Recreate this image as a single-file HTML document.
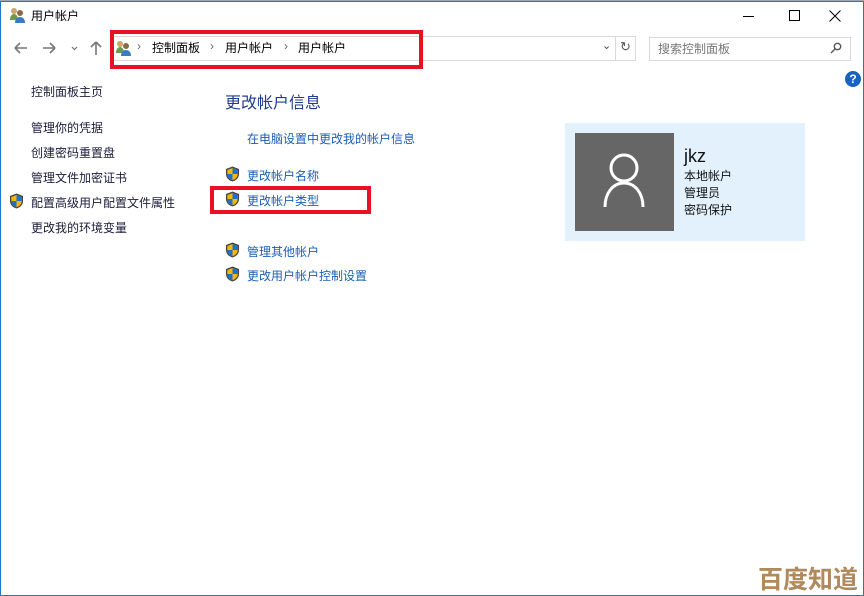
<!DOCTYPE html>
<html><head><meta charset="utf-8"><style>
*{margin:0;padding:0;box-sizing:border-box}
body{width:864px;height:596px;position:relative;background:#fff;font-family:"Liberation Sans","Noto Sans CJK SC",sans-serif;font-size:12px;overflow:hidden;color:#000}
.a{position:absolute;white-space:nowrap}
.nav{color:#1c1c3c;font-size:12px}
.lnk{color:#1a5fb4;font-size:12px}
.sh{position:absolute;width:15px;height:16px}
</style></head><body>
<div class="a" style="left:0;top:0;width:864px;height:2px;background:#9ab"></div>
<div class="a" style="left:0;top:1px;width:864px;height:595px;border:1px solid #1979ca"></div>
<svg class="a" style="left:9px;top:7px" width="17" height="16"><circle cx="5" cy="4" r="3" fill="#c9a66b"/><path d="M1 13c0-4 2-6 4-6s4 2 4 6z" fill="#6a9b4a"/><circle cx="11" cy="6" r="3" fill="#8b6a4a"/><path d="M6 16c0-4 2-6 5-6s5 2 5 6z" fill="#3a7cc4"/></svg>
<div class="a" style="left:31px;top:7px;font-size:12px">用户帐户</div>
<div class="a" style="left:743px;top:16px;width:11px;height:1px;background:#000"></div>
<div class="a" style="left:789px;top:10px;width:11px;height:11px;border:1px solid #000"></div>
<svg class="a" style="left:829px;top:10px" width="12" height="12" stroke="#000" stroke-width="1"><path d="M0.5 0.5l11 11M11.5 0.5l-11 11"/></svg>
<svg class="a" style="left:12px;top:39px" width="100" height="18" stroke="#777" stroke-width="1.6" fill="none"><path d="M3 9h12M3 9l5-5M3 9l5 5"/><path d="M31 9h12M43 9l-5-5M43 9l-5 5"/><path d="M60 8l2.5 2.5 2.5-2.5" stroke-width="1.2"/><path d="M84 3v13M84 3l-5 5M84 3l5 5"/></svg>
<div class="a" style="left:111px;top:36px;width:525px;height:25px;border:1px solid #d9d9d9"></div>
<div class="a" style="left:615px;top:36px;width:21px;height:25px;border-left:1px solid #d9d9d9"></div>
<div class="a" style="left:602px;top:39px;font-size:11px;color:#444">⌄</div>
<div class="a" style="left:620px;top:39px;font-size:13px;color:#555">↻</div>
<svg class="a" style="left:115px;top:40px" width="17" height="16"><circle cx="5" cy="4" r="3" fill="#c9a66b"/><path d="M1 13c0-4 2-6 4-6s4 2 4 6z" fill="#6a9b4a"/><circle cx="11" cy="6" r="3" fill="#8b6a4a"/><path d="M6 16c0-4 2-6 5-6s5 2 5 6z" fill="#3a7cc4"/></svg>
<div class="a" style="left:137px;top:39px;color:#666">›</div>
<div class="a" style="left:152px;top:39px">控制面板</div>
<div class="a" style="left:210px;top:39px;color:#666">›</div>
<div class="a" style="left:225px;top:39px">用户帐户</div>
<div class="a" style="left:284px;top:39px;color:#666">›</div>
<div class="a" style="left:298px;top:39px">用户帐户</div>
<div class="a" style="left:110px;top:30px;width:313px;height:39px;border:4px solid #e81123"></div>
<div class="a" style="left:649px;top:37px;width:202px;height:24px;border:1px solid #d9d9d9"></div>
<div class="a" style="left:658px;top:40px;color:#777">搜索控制面板</div>
<svg class="a" style="left:830px;top:42px" width="12" height="12" stroke="#555" stroke-width="1.4" fill="none"><circle cx="7.5" cy="4.5" r="3.2"/><path d="M5 7L1 11"/></svg>
<div class="a" style="left:845px;top:71px;width:16px;height:16px;border-radius:50%;background:#1a62c0;color:#fff;font-weight:bold;font-size:12px;text-align:center;line-height:16px">?</div>
<div class="a nav" style="left:31px;top:83px">控制面板主页</div>
<div class="a nav" style="left:31px;top:119px">管理你的凭据</div>
<div class="a nav" style="left:31px;top:144px">创建密码重置盘</div>
<div class="a nav" style="left:31px;top:169px">管理文件加密证书</div>
<div class="a nav" style="left:31px;top:194px">配置高级用户配置文件属性</div>
<div class="a nav" style="left:31px;top:219px">更改我的环境变量</div>
<div class="a" style="left:225px;top:89px;font-size:16px;color:#1e3d8c">更改帐户信息</div>
<div class="a lnk" style="left:247px;top:130px">在电脑设置中更改我的帐户信息</div>
<div class="a lnk" style="left:247px;top:167px">更改帐户名称</div>
<div class="a lnk" style="left:247px;top:192px">更改帐户类型</div>
<div class="a" style="left:210px;top:186px;width:161px;height:28px;border:4px solid #e81123"></div>
<div class="a lnk" style="left:247px;top:243px">管理其他帐户</div>
<div class="a lnk" style="left:247px;top:267px">更改用户帐户控制设置</div>
<svg width="0" height="0" style="position:absolute"><defs><g id="s"><path d="M7.5 0.5L14 3v5c0 4-3 6.5-6.5 7.5C4 14.5 1 12 1 8V3z" fill="#444"/><path d="M7.5 2L12.7 4v4c0 3.3-2.4 5.3-5.2 6.2C4.7 13.3 2.3 11.3 2.3 8V4z" fill="#f5b800"/><path d="M7.5 2L12.7 4v4H7.5zM7.5 8v6.2C4.7 13.3 2.3 11.3 2.3 8z" fill="#1f6fd0"/></g></defs></svg>
<svg class="sh" style="left:9px;top:193px"><use href="#s"/></svg>
<svg class="sh" style="left:225px;top:166px"><use href="#s"/></svg>
<svg class="sh" style="left:225px;top:191px"><use href="#s"/></svg>
<svg class="sh" style="left:225px;top:242px"><use href="#s"/></svg>
<svg class="sh" style="left:225px;top:266px"><use href="#s"/></svg>
<div class="a" style="left:565px;top:123px;width:240px;height:118px;background:#e3f1fc"></div>
<div class="a" style="left:575px;top:133px;width:99px;height:98px;background:#666"></div>
<svg class="a" style="left:600px;top:150px" width="50" height="60" stroke="#fff" stroke-width="3" fill="none"><circle cx="24" cy="18" r="13"/><path d="M5 57c0-14 8-24 19-24s19 10 19 24"/></svg>
<div class="a" style="left:684px;top:146px;font-size:18px;color:#111">jkz</div>
<div class="a" style="left:684px;top:167px;color:#111">本地帐户</div>
<div class="a" style="left:684px;top:184px;color:#111">管理员</div>
<div class="a" style="left:684px;top:201px;color:#111">密码保护</div>
<div class="a" style="left:758px;top:560px;font-size:25px;font-weight:bold;color:#b08a5c">百度知道</div>
</body></html>
